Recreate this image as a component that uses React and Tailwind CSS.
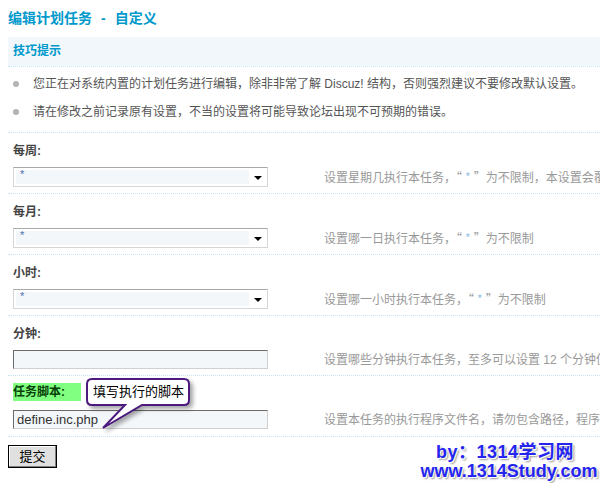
import React from 'react';

const font = { fontFamily: '"Liberation Sans", "Noto Sans CJK SC", sans-serif' };
const cjk = { fontFamily: '"Noto Sans CJK SC", sans-serif' };

function Select() {
  return (
    <div className="relative h-[20px] w-[255px] border border-[#d6d6d6] border-t-[#a9a9a9] bg-white">
      <div className="absolute left-[2px] top-[2px] h-[14px] w-[233px] bg-[#f4f7fa]">
        <span className="absolute left-[4px] top-[-3px] text-[11px] leading-[14px] text-[#4a6fb0]">*</span>
      </div>
      <div className="absolute right-[5px] top-[8px] h-0 w-0 border-x-[4px] border-t-[4px] border-x-transparent border-t-black" />
    </div>
  );
}

function Input({ value }) {
  return (
    <div className="h-[19px] w-[255px] border border-[#cfcfcf] border-t-[#6b6b6b] border-l-[#6b6b6b] bg-[#f4f7fa] pl-[3px] text-[13px] leading-[17px] text-[#333]">
      {value}
    </div>
  );
}

function Star() {
  return (
    <span style={cjk}>
      “<span className="mx-[3px] text-[#9cc4e4]">*</span>”
    </span>
  );
}

function Row({ label, field, help }) {
  return (
    <div className="border-b border-dotted border-[#c4e3f3]">
      <div className="pl-[5px] pt-[9px] text-[12px] font-bold leading-[18px] text-[#444]">{label}</div>
      <div className="mt-[7px] flex items-center pb-[6px]">
        <div className="w-[316px] shrink-0 pl-[5px]">{field}</div>
        <div className="whitespace-nowrap text-[12px] leading-[16px] text-[#999]">{help}</div>
      </div>
    </div>
  );
}

export default function App() {
  return (
    <div className="relative h-[483px] w-[600px] overflow-hidden bg-white" style={font}>
      <div className="w-[780px] pl-2">
        <h1 className="pt-[8px] text-[14px] font-bold leading-[20px] text-[#0099cc]">
          编辑计划任务<span className="mx-[9px]">-</span>自定义
        </h1>

        <div className="mt-[9px] h-[29px] bg-[#f2f7fb] pl-[5px] text-[12px] font-bold leading-[29px] text-[#0099cc]">技巧提示</div>
        <div className="border-t border-dotted border-[#c4e3f3] pb-[6px] pt-[3px]">
          <div className="flex h-[28px] items-center text-[12px] text-[#555]">
            <span className="ml-[5px] mr-[14px] h-[6px] w-[6px] rounded-full bg-[#b3b3b3]" />
            您正在对系统内置的计划任务进行编辑，除非非常了解 Discuz! 结构，否则强烈建议不要修改默认设置。
          </div>
          <div className="flex h-[28px] items-center text-[12px] text-[#555]">
            <span className="ml-[5px] mr-[14px] h-[6px] w-[6px] rounded-full bg-[#b3b3b3]" />
            请在修改之前记录原有设置，不当的设置将可能导致论坛出现不可预期的错误。
          </div>
        </div>
        <div className="border-t border-dotted border-[#c4e3f3]" />

        <Row label="每周:" field={<Select />} help={<>设置星期几执行本任务，<Star />为不限制，本设置会覆盖下面的每月设置</>} />
        <Row label="每月:" field={<Select />} help={<>设置哪一日执行本任务，<Star />为不限制</>} />
        <Row label="小时:" field={<Select />} help={<>设置哪一小时执行本任务，<Star />为不限制</>} />
        <Row label="分钟:" field={<Input value="" />} help={<>设置哪些分钟执行本任务，至多可以设置 12 个分钟值，多个值之间用半角逗号 "," 隔开，留空为不限制</>} />

        <div className="border-b border-dotted border-[#c4e3f3]">
          <div className="pl-[5px] pt-[7px]">
            <div className="h-[18px] w-[68px] bg-[#80ff80] text-[12px] font-bold leading-[18px] text-[#064006]">任务脚本:</div>
          </div>
          <div className="mt-[9px] flex items-center pb-[7px]">
            <div className="w-[316px] shrink-0 pl-[5px]"><Input value="define.inc.php" /></div>
            <div className="whitespace-nowrap text-[12px] leading-[16px] text-[#999]">设置本任务的执行程序文件名，请勿包含路径，程序脚本统一存放于 ./include/cron/ 目录中</div>
          </div>
        </div>

        <button className="mt-[8px] h-[23px] w-[49px] border border-black bg-[#e0e0e0] text-[13px] leading-[19px] text-black shadow-[inset_-1px_-1px_0_#808080,inset_1px_1px_0_#ffffff]">提交</button>
      </div>

      <div className="absolute left-[80px] top-[374px] h-[60px] w-[120px]">
        <svg width="120" height="60" className="absolute left-0 top-0 drop-shadow-[3px_3px_2px_rgba(0,0,0,0.35)]">
          <path d="M 12 5 H 104 Q 109 5 109 10 V 26 Q 109 31 104 31 H 62 L 23 54 L 45 31 H 12 Q 7 31 7 26 V 10 Q 7 5 12 5 Z" fill="#ffffff" stroke="#4c1a7e" strokeWidth="2" />
        </svg>
        <div className="absolute left-[13px] top-[8px] whitespace-nowrap text-[13px] leading-[20px] text-black">填写执行的脚本</div>
      </div>

      <div className="absolute left-[418px] top-[443px] w-[182px] text-[18px] font-bold leading-[19px] text-[#2525f0] [text-shadow:1px_1px_0_#ffffff,2px_2px_2px_#9a9a9a]">
        <div className="pl-[18px] tracking-[0.5px]">by：1314学习网</div>
        <div className="text-center">www.1314Study.com</div>
      </div>
    </div>
  );
}
